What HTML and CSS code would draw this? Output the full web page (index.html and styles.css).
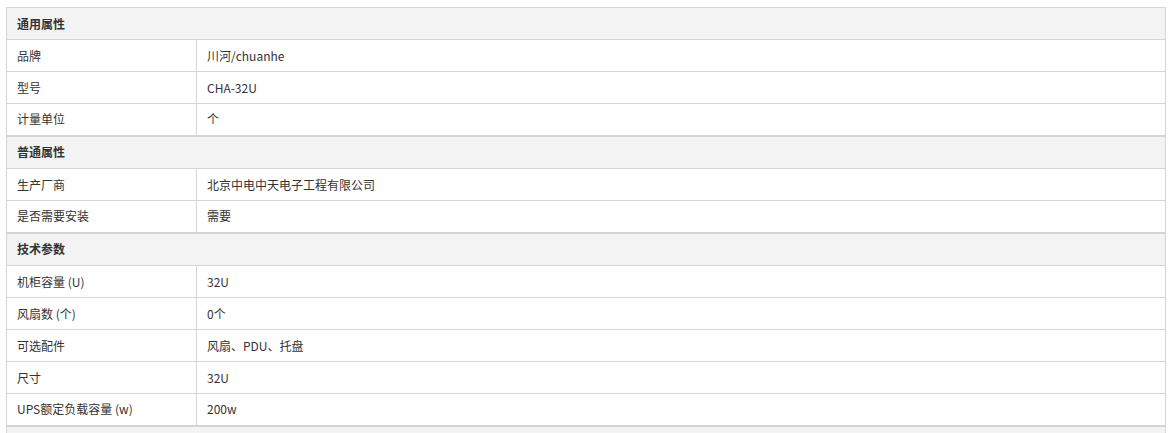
FILE: index.html
```html
<!DOCTYPE html>
<html lang="zh-CN">
<head>
<meta charset="utf-8">
<title>规格参数</title>
<link rel="stylesheet" href="styles.css">
</head>
<body>
<div class="wrap">
<table class="spec">
  <colgroup><col class="c-key"><col class="c-val"></colgroup>
  <tbody>
    <tr class="group first"><th colspan="2">通用属性</th></tr>
    <tr><td>品牌</td><td>川河/chuanhe</td></tr>
    <tr><td>型号</td><td>CHA-32U</td></tr>
    <tr><td>计量单位</td><td>个</td></tr>
    <tr class="group"><th colspan="2">普通属性</th></tr>
    <tr><td>生产厂商</td><td>北京中电中天电子工程有限公司</td></tr>
    <tr><td>是否需要安装</td><td>需要</td></tr>
    <tr class="group"><th colspan="2">技术参数</th></tr>
    <tr><td>机柜容量 (U)</td><td>32U</td></tr>
    <tr><td>风扇数 (个)</td><td>0个</td></tr>
    <tr><td>可选配件</td><td>风扇、PDU、托盘</td></tr>
    <tr><td>尺寸</td><td>32U</td></tr>
    <tr><td>UPS额定负载容量 (w)</td><td>200w</td></tr>
    <tr class="group"><th colspan="2">&nbsp;</th></tr>
  </tbody>
</table>
</div>
</body>
</html>
```

FILE: styles.css
```css
html, body {
  margin: 0;
  padding: 0;
  background: #fff;
}
.wrap {
  padding: 7px 6px 0 6px;
}
.spec {
  width: 1160px;
  border-collapse: collapse;
  font-family: "Noto Sans CJK SC", "Noto Sans", sans-serif;
  font-size: 12px;
  color: #333;
}
.c-key { width: 190px; }
.spec td, .spec th {
  border: 1px solid #d3d4d8;
  height: 32px;
  padding: 0 10px;
  box-sizing: border-box;
  text-align: left;
  vertical-align: middle;
  line-height: 16px;
}
.spec th {
  background: #f3f3f3;
  font-weight: bold;
  border-top-width: 2px;
  height: 33px;
}
.spec tr.first th {
  border-top-width: 1px;
  height: 32px;
}
```
